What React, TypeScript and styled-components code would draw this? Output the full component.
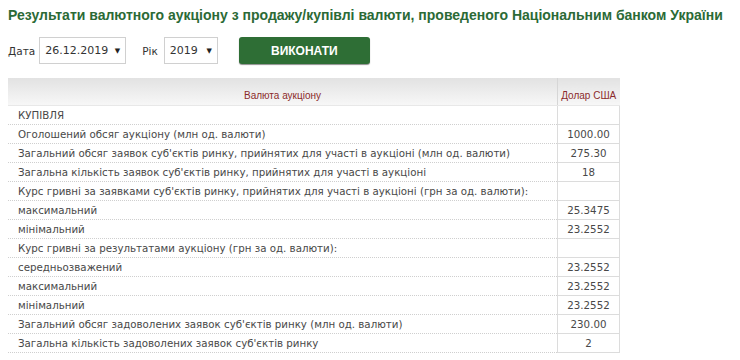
import React from "react";
import styled, { createGlobalStyle } from "styled-components";

const GlobalStyle = createGlobalStyle`
	html, body {
		margin: 0;
		padding: 0;
		background: #ffffff;
	}
`;

const Page = styled.div`
	padding: 6px 8px 0 8px;
	font-family: "DejaVu Sans", Verdana, sans-serif;
	color: #444;
`;

const Title = styled.h1`
	margin: 0;
	font-family: "Liberation Sans", Arial, sans-serif;
	font-size: 14px;
	line-height: 18px;
	font-weight: bold;
	color: #2b6a36;
	white-space: nowrap;
`;

const Toolbar = styled.div`
	display: flex;
	align-items: center;
	margin-top: 13px;
	height: 27px;
`;

const FieldLabel = styled.span<{ $gap: number; $lead?: number }>`
	font-size: 10.5px;
	color: #333;
	margin-left: ${({ $lead }) => $lead ?? 0}px;
	margin-right: ${({ $gap }) => $gap}px;
`;

const SelectBox = styled.div<{ $width: number }>`
	box-sizing: border-box;
	width: ${({ $width }) => $width}px;
	height: 27px;
	border: 1px solid #d0d0d0;
	background: #fff;
	display: flex;
	align-items: center;
	padding: 0 5px 0 5px;
	font-size: 11px;
	color: #333;
`;

const Arrow = styled.span`
	margin-left: auto;
	font-size: 7px;
	color: #222;
`;

const RunButton = styled.button`
	box-sizing: border-box;
	margin-left: 21px;
	width: 131px;
	height: 27px;
	border: none;
	border-radius: 3px;
	background: #2e6e35;
	box-shadow: 0 1px 1px rgba(0, 0, 0, 0.45);
	color: #fff;
	font-family: "Liberation Sans", Arial, sans-serif;
	font-size: 12px;
	font-weight: bold;
	padding: 0;
`;

const Table = styled.table`
	margin-top: 14px;
	width: 612px;
	border-collapse: collapse;
	font-size: 10.25px;
	color: #484848;
`;

const HeadCell = styled.th<{ $narrow?: boolean }>`
	height: 27px;
	padding: 0 0 4px 0;
	font-family: "Liberation Sans", Arial, sans-serif;
	font-size: 10px;
	font-weight: normal;
	color: #8b2b2b;
	text-align: center;
	vertical-align: bottom;
	box-sizing: border-box;
	background: linear-gradient(#e2e2e2, #f7f7f7);
	border-bottom: 1px solid #e8e8e8;
	width: ${({ $narrow }) => ($narrow ? "62px" : "auto")};
	border-left: ${({ $narrow }) => ($narrow ? "1px solid #d6d6d6" : "none")};
`;

const LabelCell = styled.td`
	height: 18px;
	padding: 0 0 0 10px;
	border-bottom: 1px dotted #cfcfcf;
	white-space: nowrap;
`;

const ValueCell = styled.td`
	height: 18px;
	padding: 0;
	text-align: center;
	border: 1px solid #dcdcdc;
	border-top: none;
`;

type Row = [string, string];

const rows: Row[] = [
	["КУПІВЛЯ", ""],
	["Оголошений обсяг аукціону (млн од. валюти)", "1000.00"],
	["Загальний обсяг заявок суб'єктів ринку, прийнятих для участі в аукціоні (млн од. валюти)", "275.30"],
	["Загальна кількість заявок суб'єктів ринку, прийнятих для участі в аукціоні", "18"],
	["Курс гривні за заявками суб'єктів ринку, прийнятих для участі в аукціоні (грн за од. валюти):", ""],
	["максимальний", "25.3475"],
	["мінімальний", "23.2552"],
	["Курс гривні за результатами аукціону (грн за од. валюти):", ""],
	["середньозважений", "23.2552"],
	["максимальний", "23.2552"],
	["мінімальний", "23.2552"],
	["Загальний обсяг задоволених заявок суб'єктів ринку (млн од. валюти)", "230.00"],
	["Загальна кількість задоволених заявок суб'єктів ринку", "2"],
];

export default function App() {
	return (
		<Page>
			<GlobalStyle />
			<Title>
				Результати валютного аукціону з продажу/купівлі валюти, проведеного Національним банком України
			</Title>
			<Toolbar>
				<FieldLabel $gap={4}>Дата</FieldLabel>
				<SelectBox $width={87}>
					26.12.2019<Arrow>▼</Arrow>
				</SelectBox>
				<FieldLabel $gap={6} $lead={16}>
					Рік
				</FieldLabel>
				<SelectBox $width={54}>
					2019<Arrow>▼</Arrow>
				</SelectBox>
				<RunButton>ВИКОНАТИ</RunButton>
			</Toolbar>
			<Table>
				<thead>
					<tr>
						<HeadCell>Валюта аукціону</HeadCell>
						<HeadCell $narrow>Долар США</HeadCell>
					</tr>
				</thead>
				<tbody>
					{rows.map(([label, value], i) => (
						<tr key={i}>
							<LabelCell>{label}</LabelCell>
							<ValueCell>{value}</ValueCell>
						</tr>
					))}
				</tbody>
			</Table>
		</Page>
	);
}
